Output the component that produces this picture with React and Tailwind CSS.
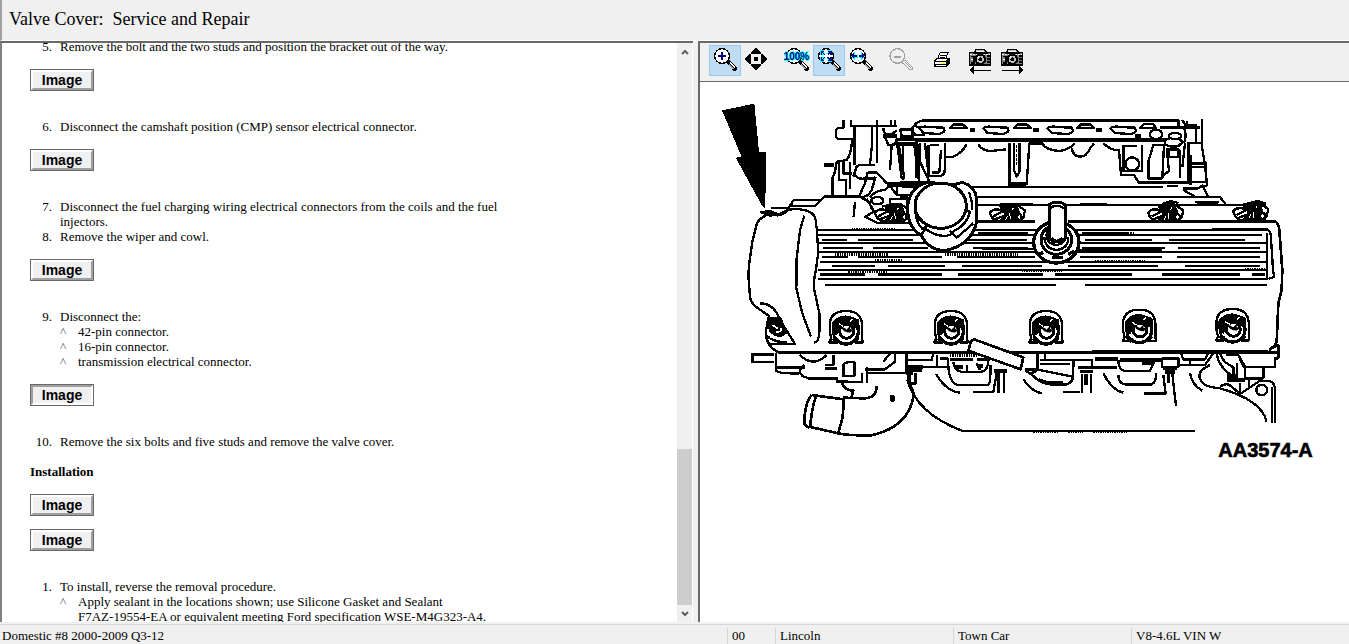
import clsx from "clsx";

const steps = [
    { no: "5.", text: "Remove the bolt and the two studs and position the bracket out of the way." },
    { image: true },
    { no: "6.", text: "Disconnect the camshaft position (CMP) sensor electrical connector." },
    { image: true },
    { no: "7.", text: "Disconnect the fuel charging wiring electrical connectors from the coils and the fuel injectors." },
    { no: "8.", text: "Remove the wiper and cowl." },
    { image: true },
    {
        no: "9.",
        text: "Disconnect the:",
        items: ["42-pin connector.", "16-pin connector.", "transmission electrical connector."],
    },
    { image: true, active: true },
    { no: "10.", text: "Remove the six bolts and five studs and remove the valve cover." },
];

const installSteps = [
    {
        no: "1.",
        text: "To install, reverse the removal procedure.",
        items: [
            "Apply sealant in the locations shown; use Silicone Gasket and Sealant\nF7AZ-19554-EA or equivalent meeting Ford specification WSE-M4G323-A4.",
        ],
    },
];

export default function App() {
    return (
        <div className="flex h-screen flex-col bg-[#f0f0f0] font-['Liberation_Serif',serif] text-[13px] leading-[15px] text-black">
            <header className="h-[41px] shrink-0 border-b border-l-2 border-b-white border-l-[#a0a0a0] px-[7px] pt-2">
                <h1 className="text-[18px] leading-[22px]">Valve Cover:&nbsp; Service and Repair</h1>
            </header>

            <main className="grid min-h-0 flex-1 grid-cols-[693fr_656fr]">
                {/* Article */}
                <section className="flex min-h-0 border-l-2 border-t-2 border-l-[#808080] border-t-[#696969] bg-white">
                    <div className="min-w-0 flex-1 overflow-hidden px-7">
                        <div className="-mt-1 max-w-[480px]">
                            <StepList steps={steps} />
                            <h2 className="mt-[15px] font-bold">Installation</h2>
                            <div className="flex flex-col gap-[13px] pb-7 pt-[15px]">
                                <ImageButton />
                                <ImageButton />
                            </div>
                            <StepList steps={installSteps} />
                        </div>
                    </div>
                    <ScrollBar />
                </section>

                {/* Picture viewer */}
                <section className="ml-[5px] flex min-h-0 flex-col border-l-2 border-t-2 border-[#696969] bg-white">
                    <Toolbar />
                    <div className="min-h-0 flex-1 overflow-hidden py-[13px] pl-[15px]">
                        <Engine />
                    </div>
                </section>
            </main>

            <footer className="mt-[2px] grid h-5 shrink-0 grid-cols-[727fr_48fr_178fr_178fr_218fr] border-t border-[#d7d7d7] pt-[3px]">
                <span className="pl-[2px]">Domestic #8 2000-2009 Q3-12</span>
                <span className="border-l border-[#d7d7d7] pl-1">00</span>
                <span className="border-l border-[#d7d7d7] pl-1">Lincoln</span>
                <span className="border-l border-[#d7d7d7] pl-1">Town Car</span>
                <span className="border-l border-[#d7d7d7] pl-1">V8-4.6L VIN W</span>
            </footer>
        </div>
    );
}

function StepList({ steps }) {
    return (
        <ol>
            {steps.map((step, i) =>
                step.image ? (
                    <li key={i} className="pb-7 pt-[15px]">
                        <ImageButton active={step.active} />
                    </li>
                ) : (
                    <li key={i} className="grid grid-cols-[22px_1fr] gap-2">
                        <span className="text-right">{step.no}</span>
                        <div>
                            {step.text}
                            {step.items && (
                                <ul>
                                    {step.items.map((item) => (
                                        <li key={item} className="grid grid-cols-[10px_1fr] gap-2">
                                            <span className="text-gray-600">^</span>
                                            <span className="whitespace-pre-line">{item}</span>
                                        </li>
                                    ))}
                                </ul>
                            )}
                        </div>
                    </li>
                )
            )}
        </ol>
    );
}

function ImageButton({ active }) {
    return (
        <button className="block h-[22px] w-16 border border-[#696969] bg-[#f0f0f0] font-['Liberation_Sans',sans-serif] text-[14px] font-bold">
            <span
                className={clsx(
                    "flex h-full items-center justify-center border-2",
                    active
                        ? "border-b-white border-l-[#a0a0a0] border-r-white border-t-[#a0a0a0]"
                        : "border-b-[#a0a0a0] border-l-white border-r-[#a0a0a0] border-t-white"
                )}
            >
                Image
            </span>
        </button>
    );
}

function ScrollBar() {
    return (
        <div className="mr-px flex w-[15px] shrink-0 flex-col bg-[#f0f0f0]">
            <button aria-label="Scroll up" className="flex h-[17px] items-center justify-center">
                <svg className="h-2 w-2" viewBox="0 0 8 8" fill="none" stroke="#606060" strokeWidth="2">
                    <path d="M1 6 L4 3 L7 6" />
                </svg>
            </button>
            <div className="flex flex-1 flex-col justify-end">
                <div className="h-2/7 bg-[#cdcdcd]" />
            </div>
            <button aria-label="Scroll down" className="flex h-[17px] items-center justify-center">
                <svg className="h-2 w-2" viewBox="0 0 8 8" fill="none" stroke="#606060" strokeWidth="2">
                    <path d="M1 2 L4 5 L7 2" />
                </svg>
            </button>
        </div>
    );
}

function Toolbar() {
    return (
        <div className="flex h-[39px] shrink-0 items-start gap-2 border-b border-[#696969] bg-[#f0f0f0] pl-[9px] pt-[2px]">
            <div className="flex">
                <ToolButton label="Zoom in" active>
                    <Glass />
                    <path d="M28 33H50M39 22V44" stroke="#000080" strokeWidth="6" />
                </ToolButton>
                <ToolButton label="Pan">
                    <path
                        d="M45 8L59 22V26H31V22ZM45 76L59 62V58H31V62ZM11 42L25 28H29V56H25ZM79 42L65 28H61V56H65Z"
                        fill="#000"
                    />
                    <rect x="40" y="37" width="10" height="10" fill="#000" />
                </ToolButton>
            </div>
            <div className="flex">
                <ToolButton label="Actual size">
                    <Glass />
                    <text
                        x="8"
                        y="45"
                        fontFamily="Liberation Sans, sans-serif"
                        fontSize="30"
                        fontWeight="bold"
                        fill="#000080"
                        stroke="#00ffff"
                        strokeWidth="4"
                        paintOrder="stroke"
                    >
                        100%
                    </text>
                </ToolButton>
                <ToolButton label="Fit page" active>
                    <Glass />
                    <path
                        d="M25 29V19H34M44 19H54V29M25 37V47H34M44 47H54V37M28 22L35 29M51 22L44 29M28 44L35 37M51 44L44 37"
                        fill="none"
                        stroke="#00ffff"
                        strokeWidth="7"
                    />
                    <path
                        d="M25 29V19H34M44 19H54V29M25 37V47H34M44 47H54V37M28 22L35 29M51 22L44 29M28 44L35 37M51 44L44 37"
                        fill="none"
                        stroke="#000080"
                        strokeWidth="4"
                    />
                </ToolButton>
                <ToolButton label="Fit width">
                    <Glass />
                    <path
                        d="M18 33L28 23V30H36V36H28V43ZM60 33L50 23V30H42V36H50V43Z"
                        fill="#000080"
                        stroke="#00ffff"
                        strokeWidth="3"
                        paintOrder="stroke"
                    />
                </ToolButton>
            </div>
            <ToolButton label="Zoom out" disabled>
                <circle cx="37" cy="33" r="22" fill="none" stroke="#a0a0a0" strokeWidth="4" />
                <path d="M27 35H49" stroke="#a0a0a0" strokeWidth="6" />
                <path d="M53 49L60 45L82 67V73L76 75L53 54ZM62 52L76 68" fill="#f0f0f0" stroke="#a0a0a0" strokeWidth="3" />
            </ToolButton>
            <ToolButton label="Print">
                <path d="M38 42L45 23H69L62 42Z" fill="#fff" stroke="#000" strokeWidth="3" />
                <path d="M46 30H62M44 36H60" stroke="#000" strokeWidth="3" />
                <path d="M28 48L36 41H73V56L63 65H30Z" fill="#fff" stroke="#000" strokeWidth="4" />
                <path d="M30 49H64L72 41M64 49V64M30 57H63M67 49V60M70 46V58" stroke="#000" strokeWidth="3" fill="none" />
                <path d="M50 54H61" stroke="#ffff00" strokeWidth="4" />
            </ToolButton>
            <div className="flex">
                <ToolButton label="Previous picture">
                    <Camera />
                    <path d="M77 75H20M26 66L15 75L26 84Z" fill="#000" stroke="#000" strokeWidth="3" />
                </ToolButton>
                <ToolButton label="Next picture">
                    <Camera />
                    <path d="M14 75H74M68 66L78 75L68 84Z" fill="#000" stroke="#000" strokeWidth="3" />
                </ToolButton>
            </div>
        </div>
    );
}

function ToolButton({ label, active, disabled, children }) {
    return (
        <button
            aria-label={label}
            disabled={disabled}
            className={clsx("h-[31px] w-8", active && "bg-[#c0dcf3] outline outline-1 -outline-offset-1 outline-[#90c8f6]")}
        >
            <svg className="h-[31px] w-8" viewBox="0 0 96 93" shapeRendering="crispEdges">
                {children}
            </svg>
        </button>
    );
}

function Glass() {
    return (
        <>
            <circle cx="39" cy="33" r="22" fill="#fff" stroke="#000" strokeWidth="4" />
            <path d="M54 52L60 46L82 68V74L76 77Z" fill="#000" stroke="#000" strokeWidth="4" />
            <path d="M64 53L78 68" stroke="#fff" strokeWidth="4" />
            <path d="M60 58L74 73" stroke="#a0a0a0" strokeWidth="3" />
        </>
    );
}

function Camera() {
    return (
        <>
            <path d="M13 24H78V60H13Z" fill="#808080" />
            <path d="M27 24L33 14H59L65 24Z" fill="#c0c0c0" stroke="#000" strokeWidth="4" />
            <path d="M36 19H56" stroke="#fff" strokeWidth="3" />
            <path d="M13 23H78M13 60H78M13 24V60M77 24V60" stroke="#000" strokeWidth="4" />
            <path d="M17 34H27V54H17M65 33H74M65 41H74M65 50H74" fill="none" stroke="#000" strokeWidth="5" />
            <path d="M16 28H76M18 44H24" stroke="#fff" strokeWidth="3" strokeDasharray="5 3" />
            <circle cx="46" cy="43" r="14" fill="#c0c0c0" stroke="#000" strokeWidth="7" />
            <circle cx="46" cy="43" r="6" fill="#000" />
            <path d="M38 38L43 34" stroke="#fff" strokeWidth="4" />
        </>
    );
}

// bolt boss on the lower edge of the cover
function Boss({ x, y = 700 }) {
    return (
        <g transform={`translate(${x} ${y})`}>
            <path d="M-50 42L-44 30L-49 10V-15Q-44-52 0-52Q45-52 48-12V28L50 42Z" fill="#fff" />
            <circle cx="0" cy="10" r="37" strokeWidth="10" fill="#fff" />
            <path d="M-40-15Q-20-40 8-34L36-24L38 2L20-10Q0-18-18-6L-30 20L-40 6Z" fill="#000" />
            <circle cx="2" cy="9" r="21" strokeWidth="9" fill="#fff" />
            <path d="M-16-6L2 4L18-12L10 2L20 6L12 12L0 10L-8 6Z" fill="#000" strokeWidth="2" />
            <path d="M-22-14L-8-6M12-20L20-28M-32 20Q-20 36 0 36" stroke="#fff" strokeWidth="4" />
            <path d="M-50 42H-26M26 42H50M-40 30L-24 44M38 30L24 44" strokeWidth="8" />
        </g>
    );
}

// coil seat behind the cover
function Coil({ x, y = 358 }) {
    return (
        <g transform={`translate(${x} ${y})`}>
            <path d="M-55-5Q-45-20-20-12L-5-30L20-32L50-12L45 10L30 20H-35Q-52 12-55-5Z" fill="#fff" />
            <path d="M-24-24H24L32-6L18 20H-24L-8 0Z" fill="#000" />
            <path d="M-45 6L-18-8M-40 15L-12 4M26-4Q45 0 38 16M18 0L30 18" />
            <path d="M-8 16L-2 4M6 14L4-4M12-14L16-20" stroke="#fff" strokeWidth="3" />
        </g>
    );
}

function Engine() {
    return (
        <svg
            viewBox="0 0 1902 1125"
            className="h-auto w-full max-w-[634px]"
            fill="none"
            stroke="#000"
            strokeWidth="7"
            strokeLinejoin="round"
            shapeRendering="crispEdges"
            role="img"
            aria-label="Valve cover, AA3574-A"
        >
            {/* pointer */}
            <path d="M21 46L118 26L132 170H153L151 340L140 330L62 188L80 186Z" fill="#000" stroke="none" />

            {/* intake, left end */}
            <path d="M385 75V98H372Q362 100 362 115Q362 132 374 132H412M408 75V95M412 92H545M418 92V210M470 92V160L465 208M486 75V205M540 75V92M527 75V92" />
            <path d="M412 130Q408 180 395 195L365 200L360 230L352 250V300M372 195V255H392V300M385 195V235H412M405 200V282M415 245L425 215Q430 208 445 210H480M418 238Q430 255 450 250H480M458 232L450 265L432 305M458 232H485L515 265H630M482 245L470 285L460 300L440 308" />
            <path d="M327 210H358M505 122H545" strokeWidth="12" />
            <path d="M505 100Q505 122 530 118L545 106M510 125L520 150L540 148L546 128M530 150L525 225M545 135L560 250H568L550 140M555 105H590V122H560ZM568 150H610V250M598 150L612 260M618 100Q590 85 592 105L600 120H630" />
            <path d="M550 132H630M556 146H610" strokeWidth="9" />
            <path d="M515 272H610M545 275V300H590M565 262V275M465 308Q480 285 510 285L525 272L545 300M455 312L478 350L450 365L485 383H600M525 312H575V335H525ZM500 335L525 330M420 320L416 365" />
            <ellipse cx="487" cy="317" rx="18" ry="11" />

            {/* intake flange */}
            <g transform="translate(555 0)">
                <path d="M0 103H35M0 125H38M42 135Q30 112 42 92Q55 76 75 76H835V97H900" />
                <path d="M45 134H835" strokeWidth="13" />
                <path d="M160 75H205M350 75H390M540 75H580" strokeWidth="9" />
                <path d="M58 100Q65 92 85 96L130 98Q140 112 118 117L70 114ZM250 100Q257 92 277 96L322 98Q332 112 310 117L262 114ZM443 100Q450 92 470 96L515 98Q525 112 503 117L455 114ZM632 100Q639 92 659 96L704 98Q714 112 692 117L644 114Z" />
                <path d="M150 99L162 88H188L200 99ZM342 99L354 88H380L392 99ZM532 99L544 88H570L582 99ZM720 99L732 86H758L768 99Z" />
                <path d="M210 105H226M400 105H416M589 105H605" strokeWidth="10" />
                <path d="M0 150H50M8 150V240M48 145V250M60 145V200L88 260M75 145L85 235M85 150V243H122Q134 240 134 225V145M96 232H118L123 165M90 150H118M135 185H160Q185 175 200 148M0 262H80M5 275H65" />
                <path d="M235 148Q245 168 275 168L318 163M328 145V275M342 145V225L350 245L358 230V145M388 145L380 270M388 145H428Q435 165 480 168Q510 162 525 145M515 160Q520 185 540 185Q560 185 570 160L582 145M610 145Q635 168 660 166" />
                <path d="M330 268H378" strokeWidth="12" />
                <path d="M350 150V215" strokeWidth="4" strokeDasharray="9 4" />
                <path d="M205 275H790M230 306H890M0 306H25M230 330H1040" />
                <path d="M300 328H400M540 328H620" strokeWidth="11" />
            </g>

            {/* intake, right end */}
            <g transform="translate(1140 0)">
                <path d="M72 165L78 240H118L130 262H285M85 150V228H140V150M85 152H125M175 150L160 200V250H202L207 150ZM215 160L222 228L200 245M220 163H250V186H220ZM256 165L254 250M270 145L262 215M280 140V262" />
                <circle cx="112" cy="207" r="20" fill="#fff" />
                <ellipse cx="183" cy="118" rx="19" ry="14" fill="#fff" />
                <ellipse cx="235" cy="142" rx="26" ry="13" fill="#fff" />
                <ellipse cx="240" cy="123" rx="19" ry="9" fill="#fff" />
                <path d="M195 97H262Q276 105 270 138L250 152M262 75L275 97M275 78V90H303V140M320 72V150L330 210M275 143H325M286 205H332V260H286ZM292 215H330M286 180V270M330 210L336 270L322 278M265 280H310L322 272L340 305H300L265 285M250 306H375L392 328M300 320H372M215 272H250M200 330Q225 312 250 325M440 330L490 318L510 325V378" />
                <path d="M165 135H210M120 123H138M305 325H370" strokeWidth="10" />
            </g>

            {/* cover outline */}
            <path d="M138 352L165 348L190 358L165 362Z" fill="#000" />
            <path d="M168 338H225M185 362Q210 358 218 345L232 320Q236 314 250 314H318M232 324L225 332H300L316 318L330 304H432L462 320L472 345M352 300V304" />
            <path d="M152 362Q130 372 125 388L112 440L102 510L100 540L105 605Q108 625 125 637L165 665" />
            <path d="M185 362Q215 342 245 342Q298 345 302 375L305 400L310 470L303 525Q295 550 298 585L313 655V712Q312 740 298 743" />
            <path d="M268 362L255 405L245 490L244 580L262 655L288 725" />
            <path d="M785 380H960M1060 380H1680Q1690 382 1693 405L1702 525L1700 585L1690 625L1685 740Q1680 755 1662 765" strokeWidth="8" />
            <path d="M1490 403H1655Q1668 405 1668 430L1674 525L1678 545L1660 552M1655 415V550" />

            {/* ribs */}
            <path
                d="M305 404H1655M305 421H1640M305 445H1655M312 470H1655M315 500H1655M310 525H1655M310 552H1660"
                strokeWidth="6"
            />
            <path d="M320 434H395M430 434H595M760 434H935M1110 434H1310M1362 434H1590M325 458H445M475 458H640M775 458H940M1100 458H1350M1390 458H1635M320 486H400M430 486H680M725 486H960M1095 486H1340M1385 486H1635M350 512H480M520 512H690M740 512H980M1060 512H1330M1410 512H1635M315 538H450M490 538H680M728 538H985M1020 538H1250M1342 538H1575M1610 538H1650" />
            <path d="M790 414H940M1100 414H1240M800 462H980M1090 465H1340" strokeWidth="5" />
            <path
                d="M410 404H540M360 478H520M480 495H560M400 530H520M690 478H910M1140 498H1290M1120 415H1260M1590 522H1655M920 528H1040"
                strokeWidth="8"
                strokeDasharray="4 3"
            />
            <path d="M330 569H1022M1110 569H1655" />

            <Coil x={535} />
            <Coil x={880} />
            <Coil x={1355} />
            <Coil x={1610} y={354} />

            {/* oil filler cap */}
            <path d="M640 262Q585 270 577 340Q580 400 618 420Q640 465 690 467Q770 450 785 380V310Q780 275 745 263Q730 262 720 270Z" fill="#fff" strokeWidth="9" />
            <ellipse cx="677" cy="332" rx="77" ry="68" fill="#fff" strokeWidth="9" />
            <path d="M600 330Q600 380 622 402L635 395M618 420L632 402Q670 430 705 420L720 405M705 408L725 428L775 385M755 345L765 350Q755 390 722 405M762 290L770 320V345" />

            {/* dipstick tube */}
            <ellipse cx="1024" cy="442" rx="68" ry="62" fill="#fff" strokeWidth="10" />
            <ellipse cx="1024" cy="434" rx="46" ry="44" fill="#fff" strokeWidth="9" />
            <path d="M988 425Q990 462 1024 465Q1062 460 1060 425" />
            <path d="M998 400Q985 445 1024 450Q1062 445 1050 400" fill="#fff" />
            <path d="M1002 430V332Q1005 322 1025 322Q1048 322 1050 332V430L1035 440H1015Z" fill="#fff" strokeWidth="9" />
            <path d="M1003 340Q1025 325 1048 340M1010 430L1024 438L1042 430" />
            <path d="M970 480L985 472M1010 488H1045M1060 478L1078 468" strokeWidth="10" />

            {/* lower rail and bolts */}
            <path d="M160 665L152 715Q155 755 190 772H1685" />
            <path d="M1130 768H1660M760 772H930" strokeWidth="9" />
            <path d="M135 625Q178 625 195 675L240 747H160M152 720Q180 745 215 740" />
            <path d="M158 668H195L215 712L205 718Q190 730 165 708Z" fill="#000" />
            <path d="M172 690L188 700M182 712Q200 712 198 700M165 725Q190 735 210 728" stroke="#fff" strokeWidth="5" />
            <Boss x={393} />
            <Boss x={708} />
            <Boss x={993} />
            <Boss x={1273} y={696} />
            <Boss x={1553} y={694} />

            {/* outlet elbow */}
            <g transform="translate(0 525)">
                <path d="M178 253H112V275H178M182 250V300Q185 312 255 310M255 255Q295 295 335 255M185 292H270M268 285Q245 300 262 318L280 325H365V335H440V310M355 255V285H330M385 320V285Q390 275 418 275V318H385M455 290V338M450 298H510L540 275V250M505 275L525 250M455 308H575V250M575 270H630M580 310V340H600V310" />
                <path d="M330 295H365M582 290H625M582 300H618M362 334H400" strokeWidth="11" />
                <path
                    d="M378 335Q390 362 415 362L410 382M290 375Q268 400 268 462L282 474M305 378Q292 400 285 474M290 375L385 388M282 470L370 490M387 385L383 440L370 490M385 383L445 385Q485 385 485 348M370 490Q400 497 470 496Q585 470 597 370M578 320L597 375"
                    strokeWidth="8"
                />
                <ellipse cx="532" cy="385" rx="5" ry="8" fill="#000" />
            </g>

            {/* exhaust manifold */}
            <g transform="translate(555 525)">
                <path d="M22 330Q50 430 185 482H885" />
                <path d="M400 487H475M505 487H550M580 487H680" strokeWidth="4" strokeDasharray="4 3" />
                <path d="M18 250V310H40M20 270H95L100 250M28 310V340H48V310M70 290H145M110 255V290M120 265H145M145 265Q142 340 175 345H265Q272 340 272 285M160 275Q162 300 182 305H245Q265 300 265 270M200 285V303M230 280L240 300M108 312Q140 365 180 368M220 365H280L290 310M295 310V368M312 310V368" />
                <path d="M20 290H70M22 300H66M150 268H220M165 290H190M232 268H270M282 302H320M235 288H250" strokeWidth="11" />
                <path d="M150 256H230" strokeWidth="8" strokeDasharray="4 3" />
                <path d="M412 250V298H375M370 328Q395 365 425 370M375 300L400 318Q420 340 450 343H500Q520 335 518 320L410 298M518 320V270H420M420 282H510M435 250V270M520 290V270H575V295M545 312V368M572 312V368M490 365H540M585 265H655M580 292H650M610 310Q635 360 670 368M390 312L410 302" />
                <path d="M533 292H582M540 304H578M558 312V345M415 330L440 338H490" strokeWidth="11" />
                <path d="M222 208L370 262L362 298L205 242L212 215Z" fill="#fff" strokeWidth="8" />
            </g>

            {/* rear bracket */}
            <g transform="translate(1140 525)">
                <path d="M0 268H70M70 270Q70 300 90 303H165L178 275M70 315Q70 340 90 343H170Q185 335 183 310M148 370H212L205 315M200 265V290H250V265H200M220 312V340M232 312L243 408M258 250L265 268H330L340 250M250 285H330L355 250M285 270V285M285 308Q290 345 322 362" />
                <path d="M75 270H200M100 248H240M205 296H245M210 306H240M140 280H175" strokeWidth="10" />
                <path d="M345 285Q290 310 330 345Q345 352 375 355Q500 390 515 455" />
                <path d="M365 252Q372 292 412 318M375 250L388 275L415 292V318M430 255L450 290M392 255H430L445 290H540V265H550V225L525 238M425 280V330M450 290V325H505V293M375 350Q395 335 410 350L435 372L495 332H520Q540 335 540 360V460M530 350V460M435 340V372M462 330V352" />
                <path d="M400 305V330H450M400 318H425" strokeWidth="11" />
                <circle cx="500" cy="360" r="16" />
            </g>

            <text
                x="1510"
                y="1086"
                fontFamily="Liberation Sans, sans-serif"
                fontSize="60"
                fontWeight="bold"
                fill="#000"
                strokeWidth="2"
            >
                AA3574-A
            </text>
        </svg>
    );
}
